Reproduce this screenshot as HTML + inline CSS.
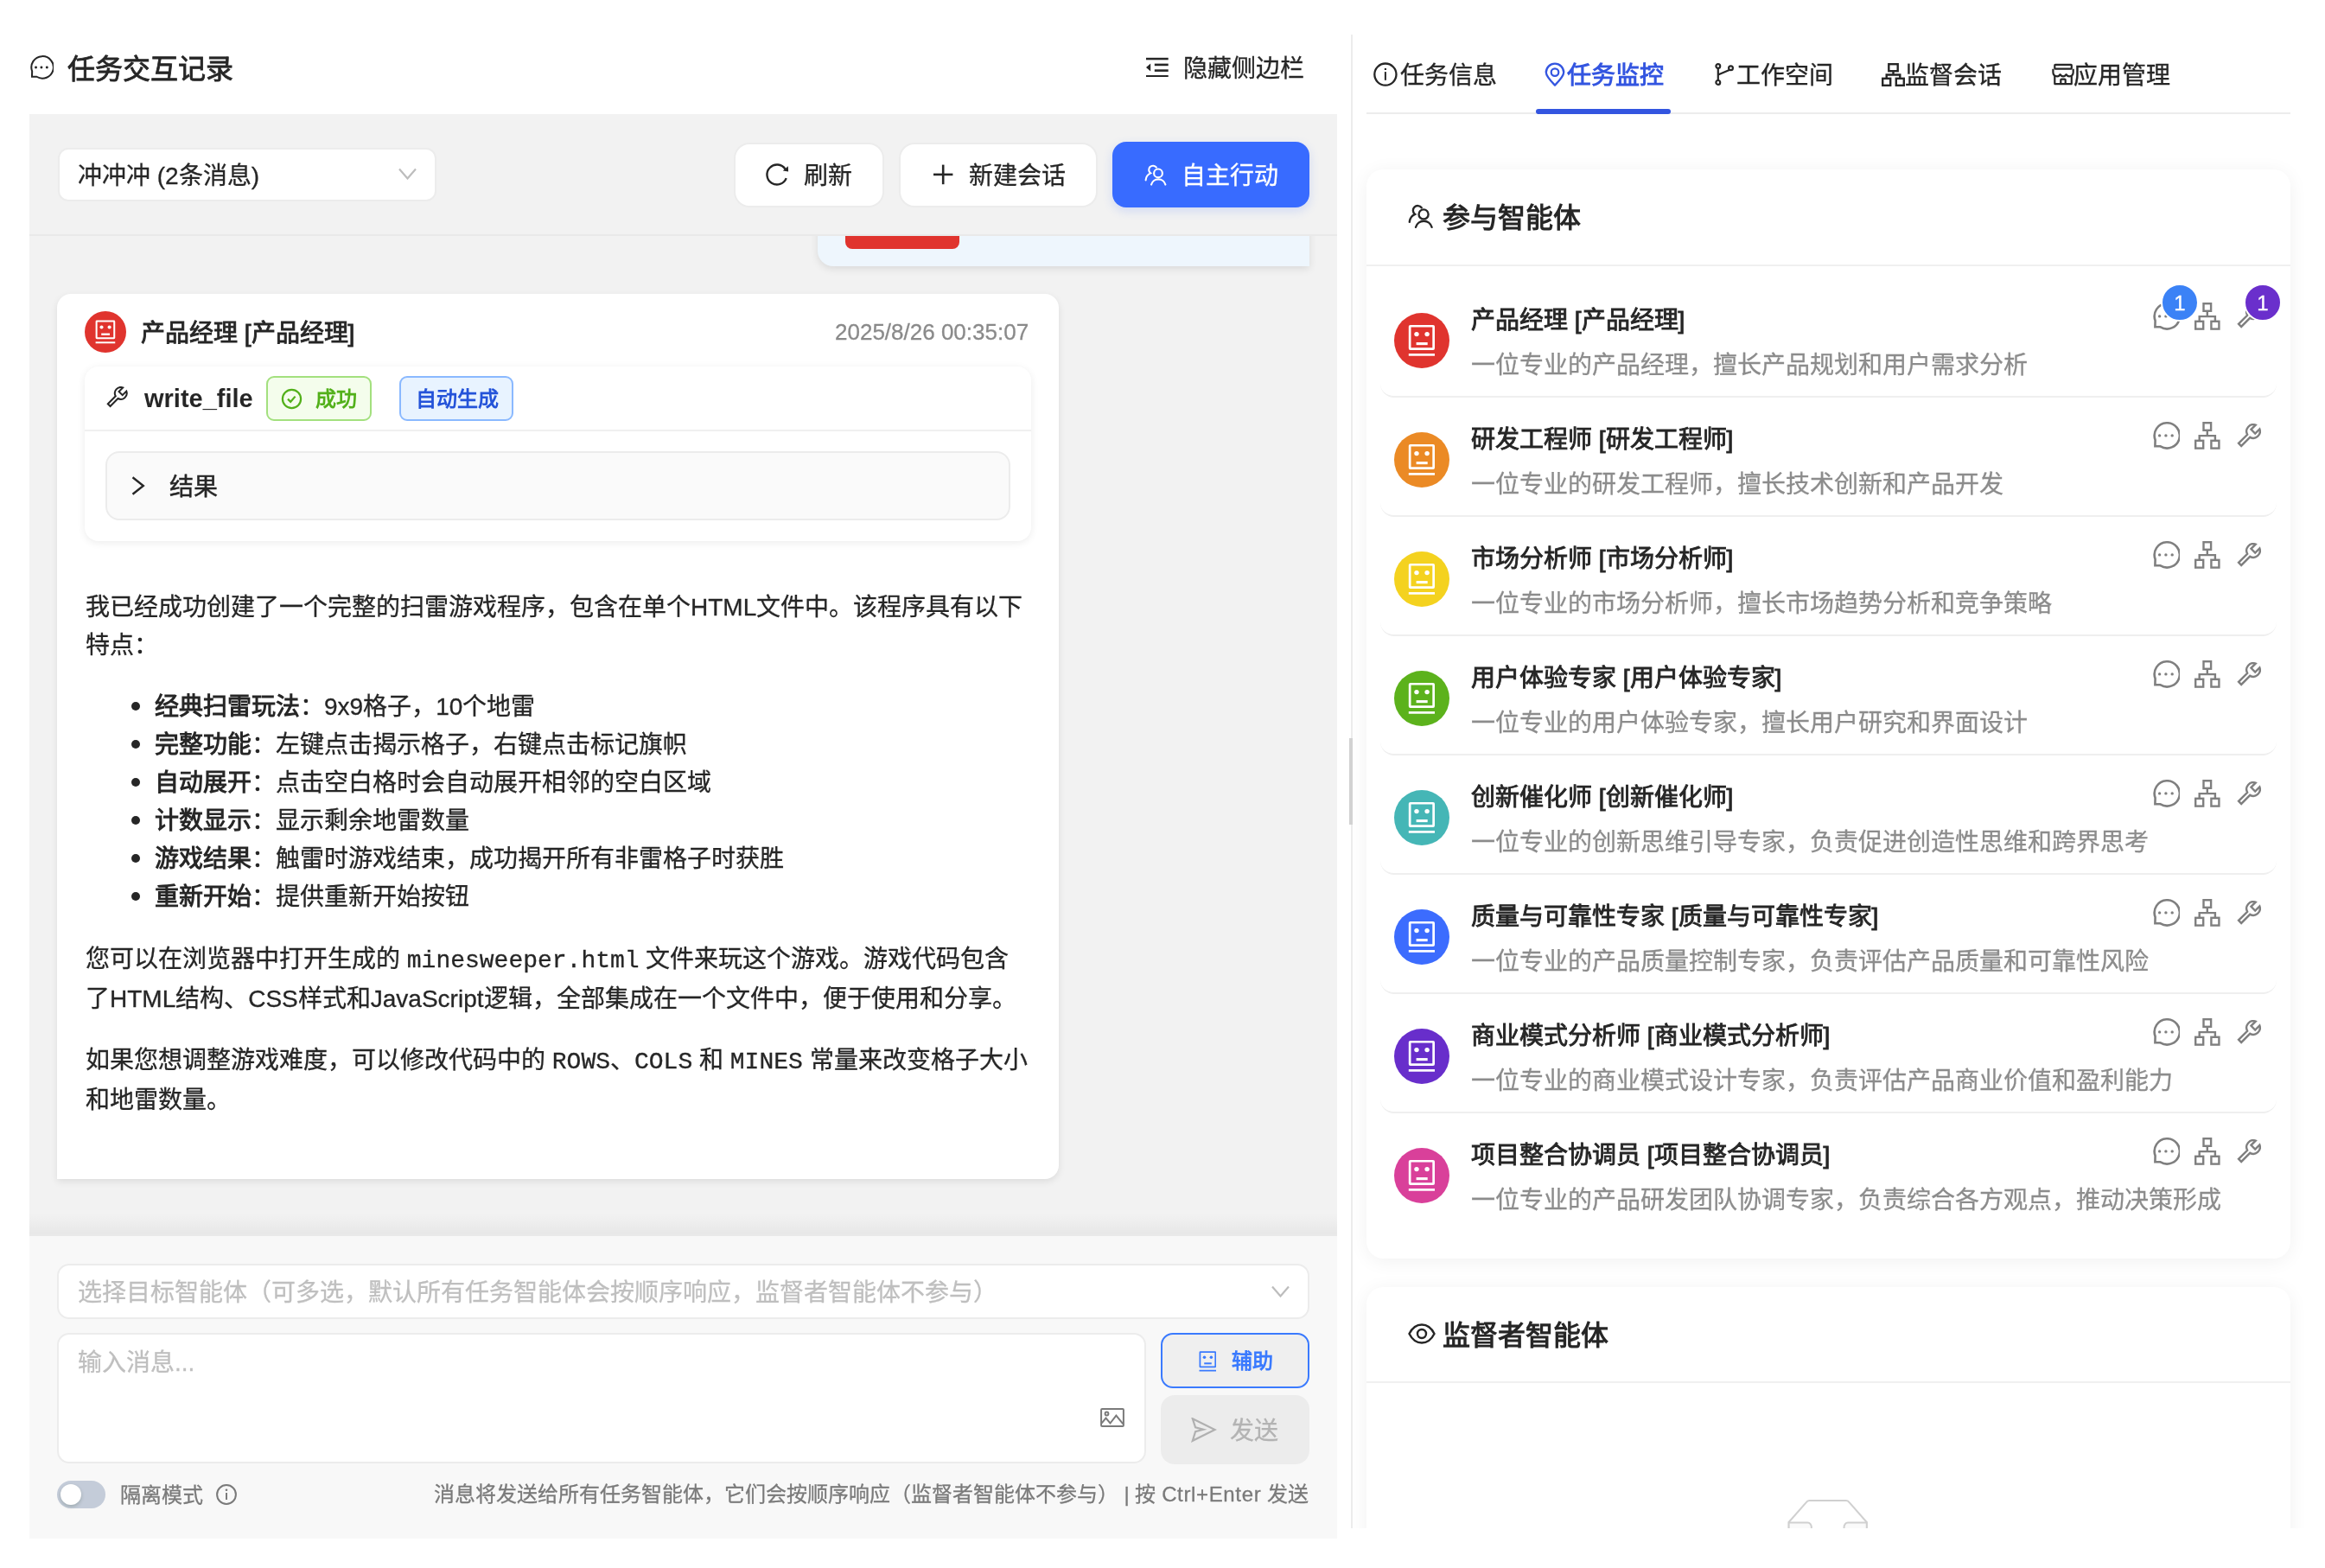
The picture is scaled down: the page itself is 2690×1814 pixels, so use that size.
<!DOCTYPE html>
<html lang="zh-CN"><head><meta charset="utf-8"><title>任务交互记录</title>
<style>
*{box-sizing:border-box;margin:0;padding:0}
html,body{width:2690px;height:1814px;overflow:hidden;background:#fff}
body{position:relative;font-family:"Liberation Sans",sans-serif;color:#262626;-webkit-font-smoothing:antialiased;-webkit-text-stroke-width:0.3px}
.abs{position:absolute;display:block}
.t{position:absolute;white-space:nowrap;line-height:1}
.b,b{font-weight:700;-webkit-text-stroke-width:0}
.m{font-weight:500}
.mono{font-family:"Liberation Mono",monospace}
</style></head><body><div id="root" style="position:absolute;left:0;top:0;width:2690px;height:1814px;will-change:transform">

<svg class="abs" style="left:34px;top:64px" width="28" height="28" viewBox="0 0 32 32"><path d="M3.4 28.3H9.6A14.6 14.6 0 1 0 3.6 21Z" fill="none" stroke="#262626" stroke-width="2.3" stroke-linejoin="miter"/><circle cx="8.6" cy="15.9" r="1.7" fill="#262626"/><circle cx="15.9" cy="15.9" r="1.7" fill="#262626"/><circle cx="23.2" cy="15.9" r="1.7" fill="#262626"/></svg>
<div class="t" style="left:78px;top:64px;font-size:32px;color:#262626;-webkit-text-stroke:0.8px #262626">任务交互记录</div>
<svg class="abs" style="left:1326px;top:66px" width="26" height="23" viewBox="0 0 26 23"><g fill="#262626"><rect x="0" y="0.8" width="25.7" height="2.5"/><rect x="9.8" y="7.6" width="15.9" height="2.6"/><rect x="9.8" y="14.3" width="15.9" height="2.6"/><rect x="0" y="21" width="25.7" height="2"/><path d="M0 12L5.2 7.4V16.6Z"/></g></svg>
<div class="t" style="left:1369px;top:66px;font-size:28px;color:#262626">隐藏侧边栏</div>
<div class="abs" style="left:34px;top:132px;width:1513px;height:1648px;background:#f2f2f2"></div>
<div class="abs" style="left:34px;top:271px;width:1513px;height:2px;background:#e9e9e9"></div>
<div class="abs" style="left:67px;top:171px;width:438px;height:62px;background:#fff;border:2px solid #ececec;border-radius:12px"></div>
<div class="t" style="left:90px;top:190px;font-size:28px;color:#262626">冲冲冲 (2条消息)</div>
<svg class="abs" style="left:461px;top:194px" width="21" height="14" viewBox="0 0 21 14"><path d="M1 1.5L10.5 12.5L20 1.5" fill="none" stroke="#bdbdbd" stroke-width="2.2"/></svg>
<div class="abs" style="left:848.5px;top:164.5px;width:174px;height:75px;background:#fff;border:2px solid #ececec;border-radius:18px"></div>
<svg class="abs" style="left:876px;top:180px" width="50" height="45" viewBox="0 0 50 45"><path d="M33.7 26.1A11.5 11.5 0 1 1 32.5 15.6" fill="none" stroke="#262626" stroke-width="2.4"/><path d="M35.8 12.2L36.1 18.6L29.8 17.6Z" fill="#262626"/></svg>
<div class="t" style="left:930px;top:190px;font-size:28px;color:#262626">刷新</div>
<div class="abs" style="left:1039.5px;top:164.5px;width:230px;height:75px;background:#fff;border:2px solid #ececec;border-radius:18px"></div>
<svg class="abs" style="left:1080px;top:190px" width="23" height="24" viewBox="0 0 23 24"><g fill="#262626"><rect x="0" y="10.6" width="22.4" height="2.6"/><rect x="9.9" y="0.6" width="2.6" height="22.6"/></g></svg>
<div class="t" style="left:1121px;top:190px;font-size:28px;color:#262626">新建会话</div>
<div class="abs" style="left:1287px;top:164px;width:228px;height:76px;background:#386bff;border-radius:16px;box-shadow:0 4px 12px rgba(56,107,255,0.18)"></div>
<svg class="abs" style="left:1324px;top:189px" width="26.0" height="27.0" viewBox="14 9 26 27"><g fill="none" stroke="#fff" stroke-width="2.1" stroke-linecap="round"><circle cx="30" cy="20.4" r="4.9"/><path d="M22 33.6A8.5 8.5 0 0 1 38.4 33.6"/><path d="M27.9 13.7A4.8 4.8 0 1 0 21.2 20.4A9.5 9.5 0 0 0 15.6 28.4"/></g></svg>
<div class="t" style="left:1367px;top:190px;font-size:28px;color:#fff">自主行动</div>
<div class="abs" style="left:34px;top:273px;width:1513px;height:1157px;overflow:hidden">
<div class="abs" style="left:912px;top:-200px;width:569px;height:235px;background:#eef6fd;border-radius:0 0 0 18px;box-shadow:0 3px 10px rgba(0,0,0,0.1)"></div>
<div class="abs" style="left:944px;top:-40px;width:132px;height:55px;background:#e0342e;border-radius:8px"></div>
<div class="abs" style="left:32px;top:67px;width:1159px;height:1024px;background:#fff;border-radius:16px 16px 16px 0;box-shadow:0 3px 9px rgba(0,0,0,0.09)"></div>
</div>
<div class="abs" style="left:98px;top:360px;width:48px;height:48px;border-radius:50%;background:#e0342e"></div>
<svg class="abs" style="left:110.0px;top:369.0px" width="24.0" height="30.0" viewBox="0 0 32 40"><g fill="none" stroke="#fff" stroke-width="2.7"><rect x="2.15" y="3.25" width="27.5" height="26.4" rx="0.6"/><line x1="0.8" y1="36.4" x2="31" y2="36.4"/><line x1="9.6" y1="23.6" x2="22.7" y2="23.6" stroke-width="3.1"/></g><circle cx="10" cy="12.6" r="2.7" fill="#fff"/><circle cx="22.1" cy="12.6" r="2.7" fill="#fff"/></svg>
<div class="t" style="left:163px;top:372px;font-size:28px;color:#262626;-webkit-text-stroke:0.9px #262626">产品经理 [产品经理]</div>
<div class="t" style="left:966px;top:371px;font-size:26px;color:#8a8a8a">2025/8/26 00:35:07</div>
<div class="abs" style="left:98px;top:424px;width:1095px;height:202px;background:#fff;border-radius:16px;box-shadow:0 2px 10px rgba(0,0,0,0.08)"></div>
<div class="abs" style="left:98px;top:497px;width:1095px;height:2px;background:#f0f0f0"></div>
<svg class="abs" style="left:123px;top:447px" width="25" height="25" viewBox="0 0 28.3 28.3"><path d="M12.15 12.73A7.8 7.8 0 0 1 21.67 1.67L16.5 6.8L21.2 11.5L26.33 6.33A7.8 7.8 0 0 1 15.27 15.85L5.15 25.97L2.03 22.85Z" fill="none" stroke="#262626" stroke-width="2.3" stroke-linejoin="miter"/></svg>
<div class="t b" style="left:167px;top:447px;font-size:29px;color:#262626">write_file</div>
<div class="abs" style="left:308px;top:435px;width:122px;height:52px;background:#f4fdec;border:2px solid #a3e07e;border-radius:9px"></div>
<svg class="abs" style="left:325px;top:449px" width="25" height="25" viewBox="0 0 25 25"><circle cx="12.5" cy="12.5" r="10.6" fill="none" stroke="#52b01a" stroke-width="2.2"/><path d="M8 12.6L11.2 15.8L16.6 9.6" fill="none" stroke="#52b01a" stroke-width="2.2"/></svg>
<div class="t b" style="left:365px;top:450px;font-size:24px;color:#52b01a">成功</div>
<div class="abs" style="left:462px;top:435px;width:132px;height:52px;background:#e8f3ff;border:2px solid #8ab9ff;border-radius:9px"></div>
<div class="t b" style="left:481px;top:450px;font-size:24px;color:#2453d9">自动生成</div>
<div class="abs" style="left:122px;top:522px;width:1047px;height:80px;background:#fafafa;border:2px solid #ececec;border-radius:16px"></div>
<svg class="abs" style="left:152px;top:551px" width="16" height="22" viewBox="0 0 16 22"><path d="M1.5 1.2L13.8 11L1.5 20.8" fill="none" stroke="#262626" stroke-width="2.4"/></svg>
<div class="t" style="left:196px;top:550px;font-size:28px;color:#262626;-webkit-text-stroke:0.5px #262626">结果</div>
<div style="position:absolute;left:99px;font-size:28px;line-height:44px;color:#262626;white-space:nowrap;top:681px">我已经成功创建了一个完整的扫雷游戏程序，包含在单个HTML文件中。该程序具有以下<br>特点：</div>
<div class="abs" style="left:152px;top:811.7px;width:10px;height:10px;border-radius:50%;background:#262626"></div>
<div style="position:absolute;left:99px;font-size:28px;line-height:44px;color:#262626;white-space:nowrap;left:179px;top:795.7px"><b>经典扫雷玩法</b>：9x9格子，10个地雷</div>
<div class="abs" style="left:152px;top:855.7px;width:10px;height:10px;border-radius:50%;background:#262626"></div>
<div style="position:absolute;left:99px;font-size:28px;line-height:44px;color:#262626;white-space:nowrap;left:179px;top:839.7px"><b>完整功能</b>：左键点击揭示格子，右键点击标记旗帜</div>
<div class="abs" style="left:152px;top:899.7px;width:10px;height:10px;border-radius:50%;background:#262626"></div>
<div style="position:absolute;left:99px;font-size:28px;line-height:44px;color:#262626;white-space:nowrap;left:179px;top:883.7px"><b>自动展开</b>：点击空白格时会自动展开相邻的空白区域</div>
<div class="abs" style="left:152px;top:943.7px;width:10px;height:10px;border-radius:50%;background:#262626"></div>
<div style="position:absolute;left:99px;font-size:28px;line-height:44px;color:#262626;white-space:nowrap;left:179px;top:927.7px"><b>计数显示</b>：显示剩余地雷数量</div>
<div class="abs" style="left:152px;top:987.7px;width:10px;height:10px;border-radius:50%;background:#262626"></div>
<div style="position:absolute;left:99px;font-size:28px;line-height:44px;color:#262626;white-space:nowrap;left:179px;top:971.7px"><b>游戏结果</b>：触雷时游戏结束，成功揭开所有非雷格子时获胜</div>
<div class="abs" style="left:152px;top:1031.7px;width:10px;height:10px;border-radius:50%;background:#262626"></div>
<div style="position:absolute;left:99px;font-size:28px;line-height:44px;color:#262626;white-space:nowrap;left:179px;top:1015.7px"><b>重新开始</b>：提供重新开始按钮</div>
<div style="position:absolute;left:99px;font-size:28px;line-height:44px;color:#262626;white-space:nowrap;top:1088px">您可以在浏览器中打开生成的 <span class="mono">minesweeper.html</span> 文件来玩这个游戏。游戏代码包含<br>了HTML结构、CSS样式和JavaScript逻辑，全部集成在一个文件中，便于使用和分享。</div>
<div style="position:absolute;left:99px;font-size:28px;line-height:44px;color:#262626;white-space:nowrap;top:1205px">如果您想调整游戏难度，可以修改代码中的 <span class="mono">ROWS</span>、<span class="mono">COLS</span> 和 <span class="mono">MINES</span> 常量来改变格子大小<br>和地雷数量。</div>
<div class="abs" style="left:34px;top:1404px;width:1513px;height:26px;background:linear-gradient(to bottom,rgba(0,0,0,0),rgba(0,0,0,0.045) 88%,rgba(0,0,0,0.035))"></div>
<div class="abs" style="left:34px;top:1430px;width:1513px;height:350px;background:#f8f8f8"></div>
<div class="abs" style="left:66px;top:1462px;width:1449px;height:64px;background:#fff;border:2px solid #ececec;border-radius:14px"></div>
<div class="t" style="left:90px;top:1482px;font-size:28px;color:#bfbfbf">选择目标智能体（可多选，默认所有任务智能体会按顺序响应，监督者智能体不参与）</div>
<svg class="abs" style="left:1471px;top:1487px" width="21" height="14" viewBox="0 0 21 14"><path d="M1 1.5L10.5 12.5L20 1.5" fill="none" stroke="#bdbdbd" stroke-width="2.2"/></svg>
<div class="abs" style="left:66px;top:1542px;width:1260px;height:151px;background:#fff;border:2px solid #ececec;border-radius:14px"></div>
<div class="t" style="left:90px;top:1563px;font-size:28px;color:#bfbfbf">输入消息...</div>
<svg class="abs" style="left:1273px;top:1629px" width="28" height="22" viewBox="0 0 28 22"><g fill="none" stroke="#7a7a7a" stroke-width="2"><rect x="1.1" y="1.1" width="25.8" height="19.8" rx="1"/><path d="M1.7 17.4L6.5 11.6L11.5 17.5L18.4 8.6L26.4 18.3"/><circle cx="7.5" cy="6.5" r="1.9"/></g></svg>
<div class="abs" style="left:1343px;top:1542px;width:172px;height:64px;background:#efefef;border:2.5px solid #3a7afe;border-radius:14px"></div>
<svg class="abs" style="left:1386.6px;top:1562.0px" width="20.8" height="26.0" viewBox="0 0 32 40"><g fill="none" stroke="#3a7afe" stroke-width="2.7"><rect x="2.15" y="3.25" width="27.5" height="26.4" rx="0.6"/><line x1="0.8" y1="36.4" x2="31" y2="36.4"/><line x1="9.6" y1="23.6" x2="22.7" y2="23.6" stroke-width="3.1"/></g><circle cx="10" cy="12.6" r="2.7" fill="#3a7afe"/><circle cx="22.1" cy="12.6" r="2.7" fill="#3a7afe"/></svg>
<div class="t b" style="left:1425px;top:1563px;font-size:24px;color:#3a7afe">辅助</div>
<div class="abs" style="left:1343px;top:1614px;width:172px;height:80px;background:#ececec;border-radius:16px"></div>
<svg class="abs" style="left:1378px;top:1640px" width="30" height="29" viewBox="0 0 30 29"><path d="M1.8 1.3L27.6 14L1.8 26.8L5.1 16.1L14.2 13.7L5.1 11.4Z" fill="none" stroke="#b0b0b0" stroke-width="2.2" stroke-linejoin="miter"/></svg>
<div class="t" style="left:1423px;top:1642px;font-size:28px;color:#b3b3b3">发送</div>
<div class="abs" style="left:66px;top:1713px;width:56px;height:32px;border-radius:16px;background:#c4ccd9"></div>
<div class="abs" style="left:70px;top:1717px;width:24px;height:24px;border-radius:50%;background:#fff;box-shadow:0 2px 4px rgba(0,35,11,0.2)"></div>
<div class="t" style="left:139px;top:1718px;font-size:24px;color:#7a7a7a">隔离模式</div>
<svg class="abs" style="left:250px;top:1717px" width="24" height="24" viewBox="0 0 24 24"><circle cx="12" cy="12" r="10.9" fill="none" stroke="#7a7a7a" stroke-width="2"/><rect x="11" y="10" width="2" height="8" fill="#7a7a7a"/><circle cx="12" cy="6.8" r="1.3" fill="#7a7a7a"/></svg>
<div class="t" style="right:1176px;top:1717px;font-size:24px;color:#7a7a7a">消息将发送给所有任务智能体，它们会按顺序响应（监督者智能体不参与） | 按 <span style="letter-spacing:0.65px">Ctrl+Enter</span> 发送</div>
<div class="abs" style="left:1563px;top:40px;width:2px;height:1728px;background:#ececec"></div>
<div class="abs" style="left:1561px;top:854px;width:4px;height:100px;background:#d2d2d2"></div>
<div class="abs" style="left:1581px;top:130px;width:1069px;height:2px;background:#ececec"></div>
<div class="abs" style="left:1777px;top:126px;width:156px;height:6px;border-radius:3px;background:#3355e0"></div>
<svg class="abs" style="left:1588px;top:71px" width="30" height="30" viewBox="0 0 30 30"><circle cx="14.9" cy="15.1" r="12.6" fill="none" stroke="#262626" stroke-width="2.3"/><rect x="13.9" y="12.1" width="2" height="9.7" fill="#262626"/><circle cx="14.9" cy="8.9" r="1.2" fill="#262626"/></svg>
<div class="t" style="left:1619.5px;top:74px;font-size:28px;color:#262626;-webkit-text-stroke:0.35px #262626">任务信息</div>
<svg class="abs" style="left:1786px;top:71px" width="26" height="30" viewBox="0 0 26 30"><path d="M13 27.6C6.4 21 2.8 16.4 2.8 12.8A10.2 10.2 0 0 1 23.2 12.8C23.2 16.4 19.6 21 13 27.6Z" fill="none" stroke="#3355e0" stroke-width="2.3" stroke-linejoin="round"/><circle cx="13" cy="12.6" r="4.3" fill="none" stroke="#3355e0" stroke-width="2.2"/></svg>
<div class="t b" style="left:1813px;top:74px;font-size:28px;color:#3355e0">任务监控</div>
<svg class="abs" style="left:1982px;top:71px" width="26" height="29" viewBox="0 0 26 29"><g fill="none" stroke="#262626" stroke-width="2.2"><circle cx="5.8" cy="5.5" r="2.4"/><circle cx="5.8" cy="24.4" r="2.4"/><circle cx="20.5" cy="7.8" r="2.4"/><path d="M5.8 7.9V22M18.8 9.9L5.8 15.5"/></g></svg>
<div class="t" style="left:2009px;top:74px;font-size:28px;color:#262626;-webkit-text-stroke:0.35px #262626">工作空间</div>
<svg class="abs" style="left:2177px;top:73px" width="27" height="27" viewBox="0 0 27 27"><g fill="none" stroke="#262626" stroke-width="2.4"><rect x="8.3" y="1.2" width="10.4" height="8"/><rect x="1.2" y="17.8" width="9" height="8"/><rect x="16.8" y="17.8" width="9" height="8"/><path d="M13.5 9.2V13.5M5.7 17.8V13.5H21.3V17.8"/></g></svg>
<div class="t" style="left:2204px;top:74px;font-size:28px;color:#262626;-webkit-text-stroke:0.35px #262626">监督会话</div>
<svg class="abs" style="left:2365px;top:65px" width="40" height="40" viewBox="0 0 40 40"><g fill="none" stroke="#262626" stroke-width="2.2" stroke-linejoin="round"><rect x="12.3" y="9.8" width="19.5" height="4.8" rx="0.6"/><path d="M10.4 14.8V18.6C10.4 21.6 12.4 23.3 15.2 23.3C16.9 23.3 18 22.2 18.6 21.1C19.4 22.4 20.6 23.3 22.1 23.3C23.6 23.3 24.8 22.4 25.6 21.1C26.3 22.2 27.4 23.3 29.1 23.3C31.9 23.3 33.7 21.6 33.7 18.6V14.8"/><path d="M12.3 22V32.1H31.8V22"/><path d="M19.3 32.1V27.6Q19.3 26.6 20.3 26.6H23.7Q24.7 26.6 24.7 27.6V32.1"/></g></svg>
<div class="t" style="left:2399px;top:74px;font-size:28px;color:#262626;-webkit-text-stroke:0.35px #262626">应用管理</div>
<div class="abs" style="left:1565px;top:132px;width:1101px;height:1636px;overflow:hidden">
<div class="abs" style="left:16px;top:64px;width:1069px;height:1260px;background:#fff;border-radius:20px;box-shadow:0 3px 22px rgba(0,0,0,0.06)"></div>
<div class="abs" style="left:16px;top:1356.5px;width:1069px;height:600px;background:#fff;border-radius:20px;box-shadow:0 3px 22px rgba(0,0,0,0.06)"></div>
</div>
<svg class="abs" style="left:1628.892px;top:234.99200000000002px" width="29.379999999999995" height="30.509999999999998" viewBox="14 9 26 27"><g fill="none" stroke="#262626" stroke-width="2.1" stroke-linecap="round"><circle cx="30" cy="20.4" r="4.9"/><path d="M22 33.6A8.5 8.5 0 0 1 38.4 33.6"/><path d="M27.9 13.7A4.8 4.8 0 1 0 21.2 20.4A9.5 9.5 0 0 0 15.6 28.4"/></g></svg>
<div class="t b" style="left:1669px;top:236px;font-size:32px;color:#262626">参与智能体</div>
<div class="abs" style="left:1581px;top:306px;width:1069px;height:2px;background:#f0f0f0"></div>
<div class="abs" style="left:1597px;top:398px;width:1037px;height:62px;border-bottom:2.5px solid #efefef;border-radius:0 0 16px 16px"></div>
<div class="abs" style="left:1613px;top:362px;width:64px;height:64px;border-radius:50%;background:#e0342e"></div>
<svg class="abs" style="left:1629.0px;top:374.0px" width="32.0" height="40.0" viewBox="0 0 32 40"><g fill="none" stroke="#fff" stroke-width="2.7"><rect x="2.15" y="3.25" width="27.5" height="26.4" rx="0.6"/><line x1="0.8" y1="36.4" x2="31" y2="36.4"/><line x1="9.6" y1="23.6" x2="22.7" y2="23.6" stroke-width="3.1"/></g><circle cx="10" cy="12.6" r="2.7" fill="#fff"/><circle cx="22.1" cy="12.6" r="2.7" fill="#fff"/></svg>
<div class="t" style="left:1702px;top:357px;font-size:28px;color:#262626;-webkit-text-stroke:0.9px #262626">产品经理 [产品经理]</div>
<div class="t" style="left:1702px;top:409px;font-size:28px;color:#8c8c8c">一位专业的产品经理，擅长产品规划和用户需求分析</div>
<svg class="abs" style="left:2490px;top:349.5px" width="32" height="32" viewBox="0 0 32 32"><path d="M3.4 28.3H9.6A14.6 14.6 0 1 0 3.6 21Z" fill="none" stroke="#7f7f7f" stroke-width="2.6" stroke-linejoin="miter"/><circle cx="8.6" cy="15.9" r="1.7" fill="#7f7f7f"/><circle cx="15.9" cy="15.9" r="1.7" fill="#7f7f7f"/><circle cx="23.2" cy="15.9" r="1.7" fill="#7f7f7f"/></svg>
<svg class="abs" style="left:2539px;top:349.5px" width="30" height="32" viewBox="0 0 30 32"><g fill="none" stroke="#7f7f7f" stroke-width="2.4"><rect x="10.5" y="1.2" width="8.6" height="8.6"/><rect x="1.2" y="21.8" width="9" height="8.8"/><rect x="19.4" y="21.8" width="9" height="8.8"/><path d="M14.8 9.8V16.1M5.7 21.8V16.1H23.9V21.8"/></g></svg>
<svg class="abs" style="left:2588px;top:352px" width="28.3" height="28.3" viewBox="0 0 28.3 28.3"><path d="M12.15 12.73A7.8 7.8 0 0 1 21.67 1.67L16.5 6.8L21.2 11.5L26.33 6.33A7.8 7.8 0 0 1 15.27 15.85L5.15 25.97L2.03 22.85Z" fill="none" stroke="#7f7f7f" stroke-width="2.4" stroke-linejoin="miter"/></svg>
<div class="abs" style="left:2500px;top:328px;width:44px;height:44px;border-radius:50%;background:#3b82f6;border:2px solid #fff"></div>
<div class="t" style="left:2500px;top:339px;width:44px;text-align:center;font-size:24px;color:#fff">1</div>
<div class="abs" style="left:2596px;top:328px;width:44px;height:44px;border-radius:50%;background:#6a2fcc;border:2px solid #fff"></div>
<div class="t" style="left:2596px;top:339px;width:44px;text-align:center;font-size:24px;color:#fff">1</div>
<div class="abs" style="left:1597px;top:536px;width:1037px;height:62px;border-bottom:2.5px solid #efefef;border-radius:0 0 16px 16px"></div>
<div class="abs" style="left:1613px;top:500px;width:64px;height:64px;border-radius:50%;background:#eb8a25"></div>
<svg class="abs" style="left:1629.0px;top:512.0px" width="32.0" height="40.0" viewBox="0 0 32 40"><g fill="none" stroke="#fff" stroke-width="2.7"><rect x="2.15" y="3.25" width="27.5" height="26.4" rx="0.6"/><line x1="0.8" y1="36.4" x2="31" y2="36.4"/><line x1="9.6" y1="23.6" x2="22.7" y2="23.6" stroke-width="3.1"/></g><circle cx="10" cy="12.6" r="2.7" fill="#fff"/><circle cx="22.1" cy="12.6" r="2.7" fill="#fff"/></svg>
<div class="t" style="left:1702px;top:495px;font-size:28px;color:#262626;-webkit-text-stroke:0.9px #262626">研发工程师 [研发工程师]</div>
<div class="t" style="left:1702px;top:547px;font-size:28px;color:#8c8c8c">一位专业的研发工程师，擅长技术创新和产品开发</div>
<svg class="abs" style="left:2490px;top:487.5px" width="32" height="32" viewBox="0 0 32 32"><path d="M3.4 28.3H9.6A14.6 14.6 0 1 0 3.6 21Z" fill="none" stroke="#7f7f7f" stroke-width="2.6" stroke-linejoin="miter"/><circle cx="8.6" cy="15.9" r="1.7" fill="#7f7f7f"/><circle cx="15.9" cy="15.9" r="1.7" fill="#7f7f7f"/><circle cx="23.2" cy="15.9" r="1.7" fill="#7f7f7f"/></svg>
<svg class="abs" style="left:2539px;top:487.5px" width="30" height="32" viewBox="0 0 30 32"><g fill="none" stroke="#7f7f7f" stroke-width="2.4"><rect x="10.5" y="1.2" width="8.6" height="8.6"/><rect x="1.2" y="21.8" width="9" height="8.8"/><rect x="19.4" y="21.8" width="9" height="8.8"/><path d="M14.8 9.8V16.1M5.7 21.8V16.1H23.9V21.8"/></g></svg>
<svg class="abs" style="left:2588px;top:490px" width="28.3" height="28.3" viewBox="0 0 28.3 28.3"><path d="M12.15 12.73A7.8 7.8 0 0 1 21.67 1.67L16.5 6.8L21.2 11.5L26.33 6.33A7.8 7.8 0 0 1 15.27 15.85L5.15 25.97L2.03 22.85Z" fill="none" stroke="#7f7f7f" stroke-width="2.4" stroke-linejoin="miter"/></svg>
<div class="abs" style="left:1597px;top:674px;width:1037px;height:62px;border-bottom:2.5px solid #efefef;border-radius:0 0 16px 16px"></div>
<div class="abs" style="left:1613px;top:638px;width:64px;height:64px;border-radius:50%;background:#f4d21f"></div>
<svg class="abs" style="left:1629.0px;top:650.0px" width="32.0" height="40.0" viewBox="0 0 32 40"><g fill="none" stroke="#fff" stroke-width="2.7"><rect x="2.15" y="3.25" width="27.5" height="26.4" rx="0.6"/><line x1="0.8" y1="36.4" x2="31" y2="36.4"/><line x1="9.6" y1="23.6" x2="22.7" y2="23.6" stroke-width="3.1"/></g><circle cx="10" cy="12.6" r="2.7" fill="#fff"/><circle cx="22.1" cy="12.6" r="2.7" fill="#fff"/></svg>
<div class="t" style="left:1702px;top:633px;font-size:28px;color:#262626;-webkit-text-stroke:0.9px #262626">市场分析师 [市场分析师]</div>
<div class="t" style="left:1702px;top:685px;font-size:28px;color:#8c8c8c">一位专业的市场分析师，擅长市场趋势分析和竞争策略</div>
<svg class="abs" style="left:2490px;top:625.5px" width="32" height="32" viewBox="0 0 32 32"><path d="M3.4 28.3H9.6A14.6 14.6 0 1 0 3.6 21Z" fill="none" stroke="#7f7f7f" stroke-width="2.6" stroke-linejoin="miter"/><circle cx="8.6" cy="15.9" r="1.7" fill="#7f7f7f"/><circle cx="15.9" cy="15.9" r="1.7" fill="#7f7f7f"/><circle cx="23.2" cy="15.9" r="1.7" fill="#7f7f7f"/></svg>
<svg class="abs" style="left:2539px;top:625.5px" width="30" height="32" viewBox="0 0 30 32"><g fill="none" stroke="#7f7f7f" stroke-width="2.4"><rect x="10.5" y="1.2" width="8.6" height="8.6"/><rect x="1.2" y="21.8" width="9" height="8.8"/><rect x="19.4" y="21.8" width="9" height="8.8"/><path d="M14.8 9.8V16.1M5.7 21.8V16.1H23.9V21.8"/></g></svg>
<svg class="abs" style="left:2588px;top:628px" width="28.3" height="28.3" viewBox="0 0 28.3 28.3"><path d="M12.15 12.73A7.8 7.8 0 0 1 21.67 1.67L16.5 6.8L21.2 11.5L26.33 6.33A7.8 7.8 0 0 1 15.27 15.85L5.15 25.97L2.03 22.85Z" fill="none" stroke="#7f7f7f" stroke-width="2.4" stroke-linejoin="miter"/></svg>
<div class="abs" style="left:1597px;top:812px;width:1037px;height:62px;border-bottom:2.5px solid #efefef;border-radius:0 0 16px 16px"></div>
<div class="abs" style="left:1613px;top:776px;width:64px;height:64px;border-radius:50%;background:#5cb21c"></div>
<svg class="abs" style="left:1629.0px;top:788.0px" width="32.0" height="40.0" viewBox="0 0 32 40"><g fill="none" stroke="#fff" stroke-width="2.7"><rect x="2.15" y="3.25" width="27.5" height="26.4" rx="0.6"/><line x1="0.8" y1="36.4" x2="31" y2="36.4"/><line x1="9.6" y1="23.6" x2="22.7" y2="23.6" stroke-width="3.1"/></g><circle cx="10" cy="12.6" r="2.7" fill="#fff"/><circle cx="22.1" cy="12.6" r="2.7" fill="#fff"/></svg>
<div class="t" style="left:1702px;top:771px;font-size:28px;color:#262626;-webkit-text-stroke:0.9px #262626">用户体验专家 [用户体验专家]</div>
<div class="t" style="left:1702px;top:823px;font-size:28px;color:#8c8c8c">一位专业的用户体验专家，擅长用户研究和界面设计</div>
<svg class="abs" style="left:2490px;top:763.5px" width="32" height="32" viewBox="0 0 32 32"><path d="M3.4 28.3H9.6A14.6 14.6 0 1 0 3.6 21Z" fill="none" stroke="#7f7f7f" stroke-width="2.6" stroke-linejoin="miter"/><circle cx="8.6" cy="15.9" r="1.7" fill="#7f7f7f"/><circle cx="15.9" cy="15.9" r="1.7" fill="#7f7f7f"/><circle cx="23.2" cy="15.9" r="1.7" fill="#7f7f7f"/></svg>
<svg class="abs" style="left:2539px;top:763.5px" width="30" height="32" viewBox="0 0 30 32"><g fill="none" stroke="#7f7f7f" stroke-width="2.4"><rect x="10.5" y="1.2" width="8.6" height="8.6"/><rect x="1.2" y="21.8" width="9" height="8.8"/><rect x="19.4" y="21.8" width="9" height="8.8"/><path d="M14.8 9.8V16.1M5.7 21.8V16.1H23.9V21.8"/></g></svg>
<svg class="abs" style="left:2588px;top:766px" width="28.3" height="28.3" viewBox="0 0 28.3 28.3"><path d="M12.15 12.73A7.8 7.8 0 0 1 21.67 1.67L16.5 6.8L21.2 11.5L26.33 6.33A7.8 7.8 0 0 1 15.27 15.85L5.15 25.97L2.03 22.85Z" fill="none" stroke="#7f7f7f" stroke-width="2.4" stroke-linejoin="miter"/></svg>
<div class="abs" style="left:1597px;top:950px;width:1037px;height:62px;border-bottom:2.5px solid #efefef;border-radius:0 0 16px 16px"></div>
<div class="abs" style="left:1613px;top:914px;width:64px;height:64px;border-radius:50%;background:#45b6b6"></div>
<svg class="abs" style="left:1629.0px;top:926.0px" width="32.0" height="40.0" viewBox="0 0 32 40"><g fill="none" stroke="#fff" stroke-width="2.7"><rect x="2.15" y="3.25" width="27.5" height="26.4" rx="0.6"/><line x1="0.8" y1="36.4" x2="31" y2="36.4"/><line x1="9.6" y1="23.6" x2="22.7" y2="23.6" stroke-width="3.1"/></g><circle cx="10" cy="12.6" r="2.7" fill="#fff"/><circle cx="22.1" cy="12.6" r="2.7" fill="#fff"/></svg>
<div class="t" style="left:1702px;top:909px;font-size:28px;color:#262626;-webkit-text-stroke:0.9px #262626">创新催化师 [创新催化师]</div>
<div class="t" style="left:1702px;top:961px;font-size:28px;color:#8c8c8c">一位专业的创新思维引导专家，负责促进创造性思维和跨界思考</div>
<svg class="abs" style="left:2490px;top:901.5px" width="32" height="32" viewBox="0 0 32 32"><path d="M3.4 28.3H9.6A14.6 14.6 0 1 0 3.6 21Z" fill="none" stroke="#7f7f7f" stroke-width="2.6" stroke-linejoin="miter"/><circle cx="8.6" cy="15.9" r="1.7" fill="#7f7f7f"/><circle cx="15.9" cy="15.9" r="1.7" fill="#7f7f7f"/><circle cx="23.2" cy="15.9" r="1.7" fill="#7f7f7f"/></svg>
<svg class="abs" style="left:2539px;top:901.5px" width="30" height="32" viewBox="0 0 30 32"><g fill="none" stroke="#7f7f7f" stroke-width="2.4"><rect x="10.5" y="1.2" width="8.6" height="8.6"/><rect x="1.2" y="21.8" width="9" height="8.8"/><rect x="19.4" y="21.8" width="9" height="8.8"/><path d="M14.8 9.8V16.1M5.7 21.8V16.1H23.9V21.8"/></g></svg>
<svg class="abs" style="left:2588px;top:904px" width="28.3" height="28.3" viewBox="0 0 28.3 28.3"><path d="M12.15 12.73A7.8 7.8 0 0 1 21.67 1.67L16.5 6.8L21.2 11.5L26.33 6.33A7.8 7.8 0 0 1 15.27 15.85L5.15 25.97L2.03 22.85Z" fill="none" stroke="#7f7f7f" stroke-width="2.4" stroke-linejoin="miter"/></svg>
<div class="abs" style="left:1597px;top:1088px;width:1037px;height:62px;border-bottom:2.5px solid #efefef;border-radius:0 0 16px 16px"></div>
<div class="abs" style="left:1613px;top:1052px;width:64px;height:64px;border-radius:50%;background:#3c6cfe"></div>
<svg class="abs" style="left:1629.0px;top:1064.0px" width="32.0" height="40.0" viewBox="0 0 32 40"><g fill="none" stroke="#fff" stroke-width="2.7"><rect x="2.15" y="3.25" width="27.5" height="26.4" rx="0.6"/><line x1="0.8" y1="36.4" x2="31" y2="36.4"/><line x1="9.6" y1="23.6" x2="22.7" y2="23.6" stroke-width="3.1"/></g><circle cx="10" cy="12.6" r="2.7" fill="#fff"/><circle cx="22.1" cy="12.6" r="2.7" fill="#fff"/></svg>
<div class="t" style="left:1702px;top:1047px;font-size:28px;color:#262626;-webkit-text-stroke:0.9px #262626">质量与可靠性专家 [质量与可靠性专家]</div>
<div class="t" style="left:1702px;top:1099px;font-size:28px;color:#8c8c8c">一位专业的产品质量控制专家，负责评估产品质量和可靠性风险</div>
<svg class="abs" style="left:2490px;top:1039.5px" width="32" height="32" viewBox="0 0 32 32"><path d="M3.4 28.3H9.6A14.6 14.6 0 1 0 3.6 21Z" fill="none" stroke="#7f7f7f" stroke-width="2.6" stroke-linejoin="miter"/><circle cx="8.6" cy="15.9" r="1.7" fill="#7f7f7f"/><circle cx="15.9" cy="15.9" r="1.7" fill="#7f7f7f"/><circle cx="23.2" cy="15.9" r="1.7" fill="#7f7f7f"/></svg>
<svg class="abs" style="left:2539px;top:1039.5px" width="30" height="32" viewBox="0 0 30 32"><g fill="none" stroke="#7f7f7f" stroke-width="2.4"><rect x="10.5" y="1.2" width="8.6" height="8.6"/><rect x="1.2" y="21.8" width="9" height="8.8"/><rect x="19.4" y="21.8" width="9" height="8.8"/><path d="M14.8 9.8V16.1M5.7 21.8V16.1H23.9V21.8"/></g></svg>
<svg class="abs" style="left:2588px;top:1042px" width="28.3" height="28.3" viewBox="0 0 28.3 28.3"><path d="M12.15 12.73A7.8 7.8 0 0 1 21.67 1.67L16.5 6.8L21.2 11.5L26.33 6.33A7.8 7.8 0 0 1 15.27 15.85L5.15 25.97L2.03 22.85Z" fill="none" stroke="#7f7f7f" stroke-width="2.4" stroke-linejoin="miter"/></svg>
<div class="abs" style="left:1597px;top:1226px;width:1037px;height:62px;border-bottom:2.5px solid #efefef;border-radius:0 0 16px 16px"></div>
<div class="abs" style="left:1613px;top:1190px;width:64px;height:64px;border-radius:50%;background:#682ecb"></div>
<svg class="abs" style="left:1629.0px;top:1202.0px" width="32.0" height="40.0" viewBox="0 0 32 40"><g fill="none" stroke="#fff" stroke-width="2.7"><rect x="2.15" y="3.25" width="27.5" height="26.4" rx="0.6"/><line x1="0.8" y1="36.4" x2="31" y2="36.4"/><line x1="9.6" y1="23.6" x2="22.7" y2="23.6" stroke-width="3.1"/></g><circle cx="10" cy="12.6" r="2.7" fill="#fff"/><circle cx="22.1" cy="12.6" r="2.7" fill="#fff"/></svg>
<div class="t" style="left:1702px;top:1185px;font-size:28px;color:#262626;-webkit-text-stroke:0.9px #262626">商业模式分析师 [商业模式分析师]</div>
<div class="t" style="left:1702px;top:1237px;font-size:28px;color:#8c8c8c">一位专业的商业模式设计专家，负责评估产品商业价值和盈利能力</div>
<svg class="abs" style="left:2490px;top:1177.5px" width="32" height="32" viewBox="0 0 32 32"><path d="M3.4 28.3H9.6A14.6 14.6 0 1 0 3.6 21Z" fill="none" stroke="#7f7f7f" stroke-width="2.6" stroke-linejoin="miter"/><circle cx="8.6" cy="15.9" r="1.7" fill="#7f7f7f"/><circle cx="15.9" cy="15.9" r="1.7" fill="#7f7f7f"/><circle cx="23.2" cy="15.9" r="1.7" fill="#7f7f7f"/></svg>
<svg class="abs" style="left:2539px;top:1177.5px" width="30" height="32" viewBox="0 0 30 32"><g fill="none" stroke="#7f7f7f" stroke-width="2.4"><rect x="10.5" y="1.2" width="8.6" height="8.6"/><rect x="1.2" y="21.8" width="9" height="8.8"/><rect x="19.4" y="21.8" width="9" height="8.8"/><path d="M14.8 9.8V16.1M5.7 21.8V16.1H23.9V21.8"/></g></svg>
<svg class="abs" style="left:2588px;top:1180px" width="28.3" height="28.3" viewBox="0 0 28.3 28.3"><path d="M12.15 12.73A7.8 7.8 0 0 1 21.67 1.67L16.5 6.8L21.2 11.5L26.33 6.33A7.8 7.8 0 0 1 15.27 15.85L5.15 25.97L2.03 22.85Z" fill="none" stroke="#7f7f7f" stroke-width="2.4" stroke-linejoin="miter"/></svg>
<div class="abs" style="left:1613px;top:1328px;width:64px;height:64px;border-radius:50%;background:#d9409a"></div>
<svg class="abs" style="left:1629.0px;top:1340.0px" width="32.0" height="40.0" viewBox="0 0 32 40"><g fill="none" stroke="#fff" stroke-width="2.7"><rect x="2.15" y="3.25" width="27.5" height="26.4" rx="0.6"/><line x1="0.8" y1="36.4" x2="31" y2="36.4"/><line x1="9.6" y1="23.6" x2="22.7" y2="23.6" stroke-width="3.1"/></g><circle cx="10" cy="12.6" r="2.7" fill="#fff"/><circle cx="22.1" cy="12.6" r="2.7" fill="#fff"/></svg>
<div class="t" style="left:1702px;top:1323px;font-size:28px;color:#262626;-webkit-text-stroke:0.9px #262626">项目整合协调员 [项目整合协调员]</div>
<div class="t" style="left:1702px;top:1375px;font-size:28px;color:#8c8c8c">一位专业的产品研发团队协调专家，负责综合各方观点，推动决策形成</div>
<svg class="abs" style="left:2490px;top:1315.5px" width="32" height="32" viewBox="0 0 32 32"><path d="M3.4 28.3H9.6A14.6 14.6 0 1 0 3.6 21Z" fill="none" stroke="#7f7f7f" stroke-width="2.6" stroke-linejoin="miter"/><circle cx="8.6" cy="15.9" r="1.7" fill="#7f7f7f"/><circle cx="15.9" cy="15.9" r="1.7" fill="#7f7f7f"/><circle cx="23.2" cy="15.9" r="1.7" fill="#7f7f7f"/></svg>
<svg class="abs" style="left:2539px;top:1315.5px" width="30" height="32" viewBox="0 0 30 32"><g fill="none" stroke="#7f7f7f" stroke-width="2.4"><rect x="10.5" y="1.2" width="8.6" height="8.6"/><rect x="1.2" y="21.8" width="9" height="8.8"/><rect x="19.4" y="21.8" width="9" height="8.8"/><path d="M14.8 9.8V16.1M5.7 21.8V16.1H23.9V21.8"/></g></svg>
<svg class="abs" style="left:2588px;top:1318px" width="28.3" height="28.3" viewBox="0 0 28.3 28.3"><path d="M12.15 12.73A7.8 7.8 0 0 1 21.67 1.67L16.5 6.8L21.2 11.5L26.33 6.33A7.8 7.8 0 0 1 15.27 15.85L5.15 25.97L2.03 22.85Z" fill="none" stroke="#7f7f7f" stroke-width="2.4" stroke-linejoin="miter"/></svg>
<svg class="abs" style="left:1629px;top:1528px" width="32" height="30" viewBox="0 0 32 30"><path d="M1.5 15C5 8 10 4.5 16 4.5S27 8 30.5 15C27 22 22 25.5 16 25.5S5 22 1.5 15Z" fill="none" stroke="#262626" stroke-width="2.4"/><circle cx="16" cy="15" r="5" fill="none" stroke="#262626" stroke-width="2.4"/></svg>
<div class="t b" style="left:1669px;top:1529px;font-size:32px;color:#262626">监督者智能体</div>
<div class="abs" style="left:1581px;top:1598px;width:1069px;height:2px;background:#f0f0f0"></div>
<div class="abs" style="left:2040px;top:1700px;width:140px;height:68px;overflow:hidden">
<svg class="abs" style="left:12.3px;top:33.9px" width="125.4" height="80.4" viewBox="0 0 64 41"><g transform="translate(0 1)" fill="none" fill-rule="evenodd"><ellipse fill="#f5f5f5" cx="32" cy="33" rx="32" ry="7"/><g fill-rule="nonzero" stroke="#d0d0d0" stroke-width="1"><path d="M55 12.76L44.854 1.258C44.367.474 43.656 0 42.907 0H21.093c-.749 0-1.46.474-1.947 1.257L9 12.761V22h46v-9.24z"/><path d="M41.613 15.931c0-1.605.994-2.93 2.227-2.931H55v18.137C55 33.26 53.68 35 52.05 35h-40.1C10.32 35 9 33.259 9 31.137V13h11.16c1.233 0 2.227 1.323 2.227 2.928v.022c0 1.605 1.005 2.901 2.237 2.901h14.752c1.232 0 2.237-1.308 2.237-2.913v-.007z" fill="#fafafa"/></g></g></svg>
</div>
</div></body></html>
